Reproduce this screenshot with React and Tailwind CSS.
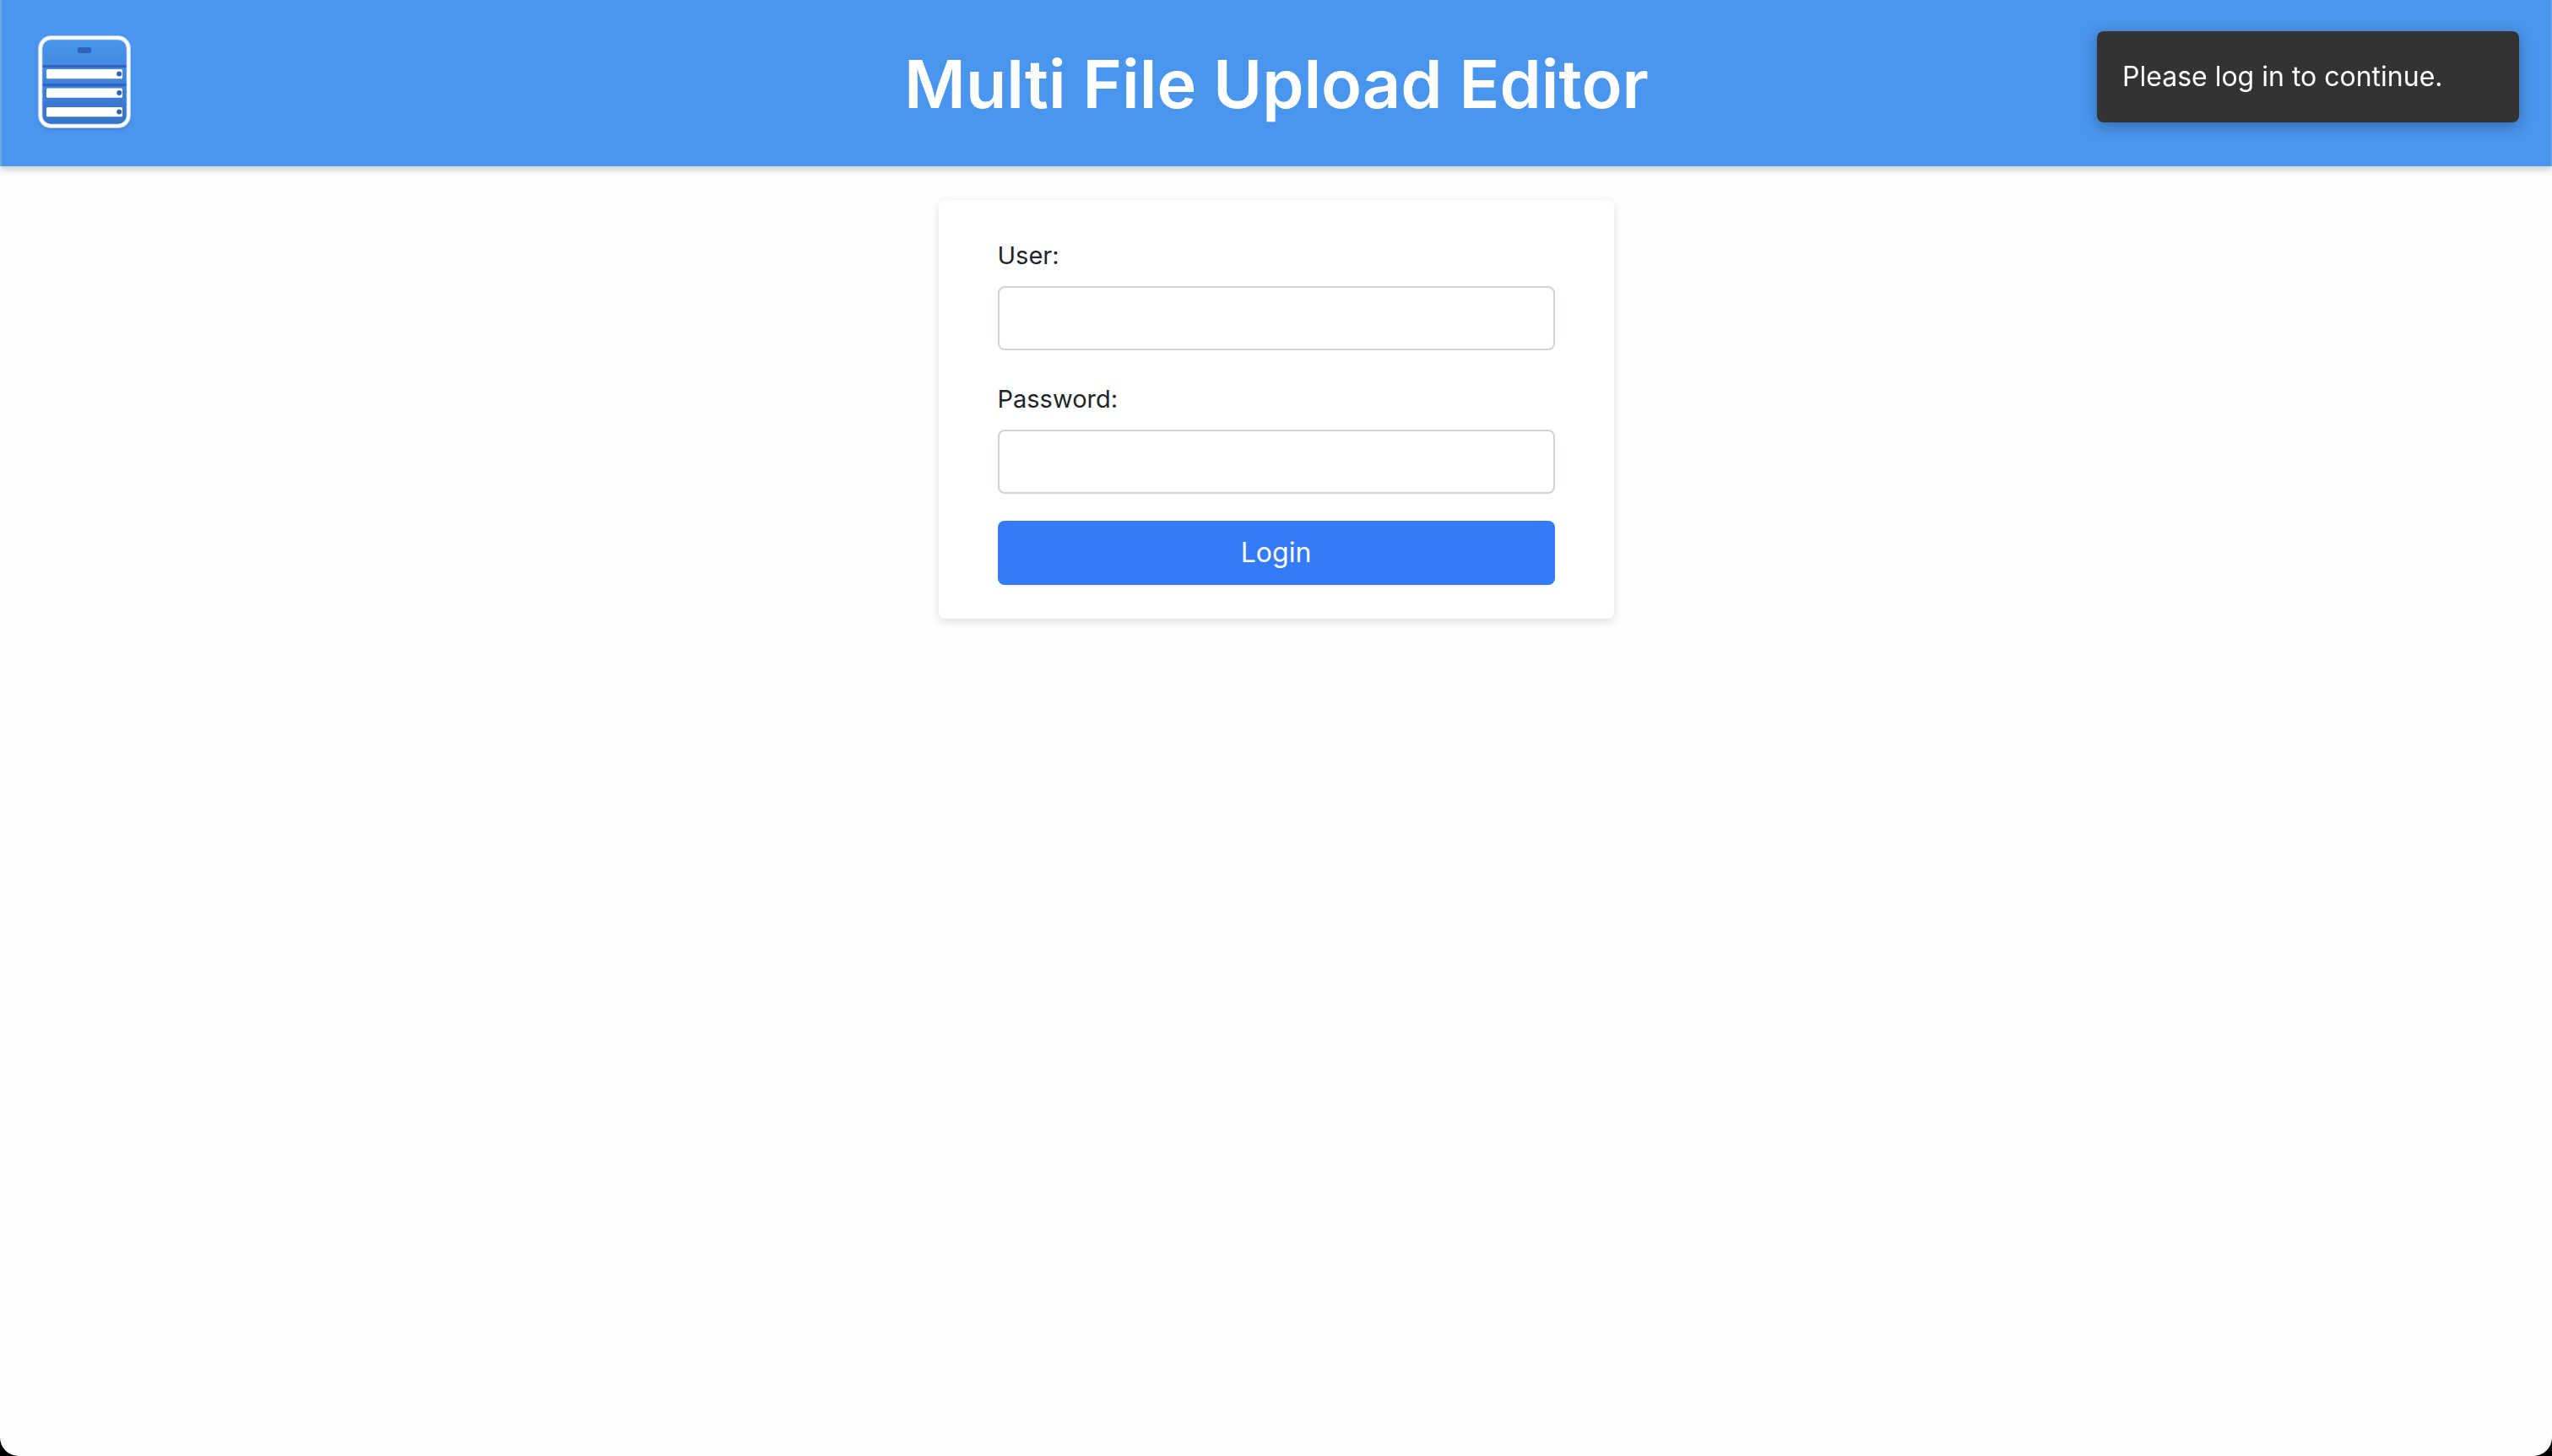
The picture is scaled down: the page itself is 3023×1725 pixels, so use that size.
function Logo() {
  return (
    <svg
      viewBox="20 18 120 121"
      className="h-[121px] w-[120px] shrink-0"
      role="img"
      aria-label="Multi File Upload Editor"
    >
      <defs>
        <linearGradient id="body" x1="0" y1="0" x2="0" y2="1">
          <stop offset="0" stopColor="#4a96ee" />
          <stop offset="1" stopColor="#3670c9" />
        </linearGradient>
        <filter id="soft" x="-20%" y="-20%" width="140%" height="140%">
          <feDropShadow dx="0" dy="3" stdDeviation="2" floodColor="#000" floodOpacity="0.25" />
        </filter>
      </defs>
      <rect x="27.5" y="24.5" width="105" height="105" rx="13" fill="url(#body)" filter="url(#soft)" />
      <g fill="#2f64bd">
        <rect x="72" y="36" width="16" height="7" rx="2" />
        <rect x="29" y="57" width="102" height="3" />
        <rect x="29" y="79" width="102" height="3" />
      </g>
      <rect x="27.8" y="24.8" width="104.5" height="104.5" rx="12.5" fill="none" stroke="#dfe8f7" strokeWidth="5" />
      <rect x="27.8" y="24.8" width="104.5" height="104.5" rx="12.5" fill="none" stroke="#ffffff" strokeWidth="2.5" />
      {[62, 84.5, 107].map((y) => (
        <g key={y}>
          <rect x="35" y={y} width="90" height="11.3" rx="1.5" fill="#ffffff" />
          <circle cx="121.2" cy={y + 5.6} r="3" fill="#2f64bd" />
        </g>
      ))}
    </svg>
  );
}

function Field({ id, label, type, autoComplete }) {
  return (
    <div className="flex flex-col gap-[14px]">
      <label htmlFor={id} className="text-[29px] leading-[44px]">
        {label}
      </label>
      <input
        id={id}
        name={id}
        type={type}
        autoComplete={autoComplete}
        className="h-[76px] w-full rounded-lg border-2 border-[#ced4da] bg-white px-6 text-[32px]"
      />
    </div>
  );
}

export default function App() {
  return (
    <div className="min-h-screen bg-black">
      <div className="min-h-screen rounded-b-[22px] bg-[#fefefe] font-['Inter',sans-serif] text-[#212529]">
        <header className="grid grid-cols-[1fr_auto_1fr] items-center border-r border-l-2 border-white/20 bg-[#4a95ed] bg-clip-border px-[38px] py-[38px] shadow-[0_4px_8px_rgba(0,0,0,0.2)]">
          <Logo />
          <h1 className="text-[79px] leading-[96px] font-semibold text-white">Multi File Upload Editor</h1>
        </header>

        <main className="flex justify-center px-6 pt-10">
          <form
            className="w-full max-w-[800px] rounded-lg bg-white px-[70px] pt-11 pb-10 shadow-[0_4px_12px_rgba(0,0,0,0.12)]"
            onSubmit={(e) => e.preventDefault()}
          >
            <div className="flex flex-col gap-9">
              <Field id="user" label="User:" type="text" autoComplete="username" />
              <Field id="password" label="Password:" type="password" autoComplete="current-password" />
            </div>
            <button
              type="submit"
              className="mt-8 h-[76px] w-full rounded-lg bg-[#357af6] text-[32px] leading-[48px] text-white"
            >
              Login
            </button>
          </form>
        </main>

        <div
          role="status"
          className="fixed top-[37px] right-[39px] w-[500px] rounded-lg bg-[#333333] px-[30px] py-[30px] text-[32px] leading-[48px] text-white shadow-[0_4px_16px_rgba(0,0,0,0.3)]"
        >
          Please log in to continue.
        </div>
      </div>
    </div>
  );
}
